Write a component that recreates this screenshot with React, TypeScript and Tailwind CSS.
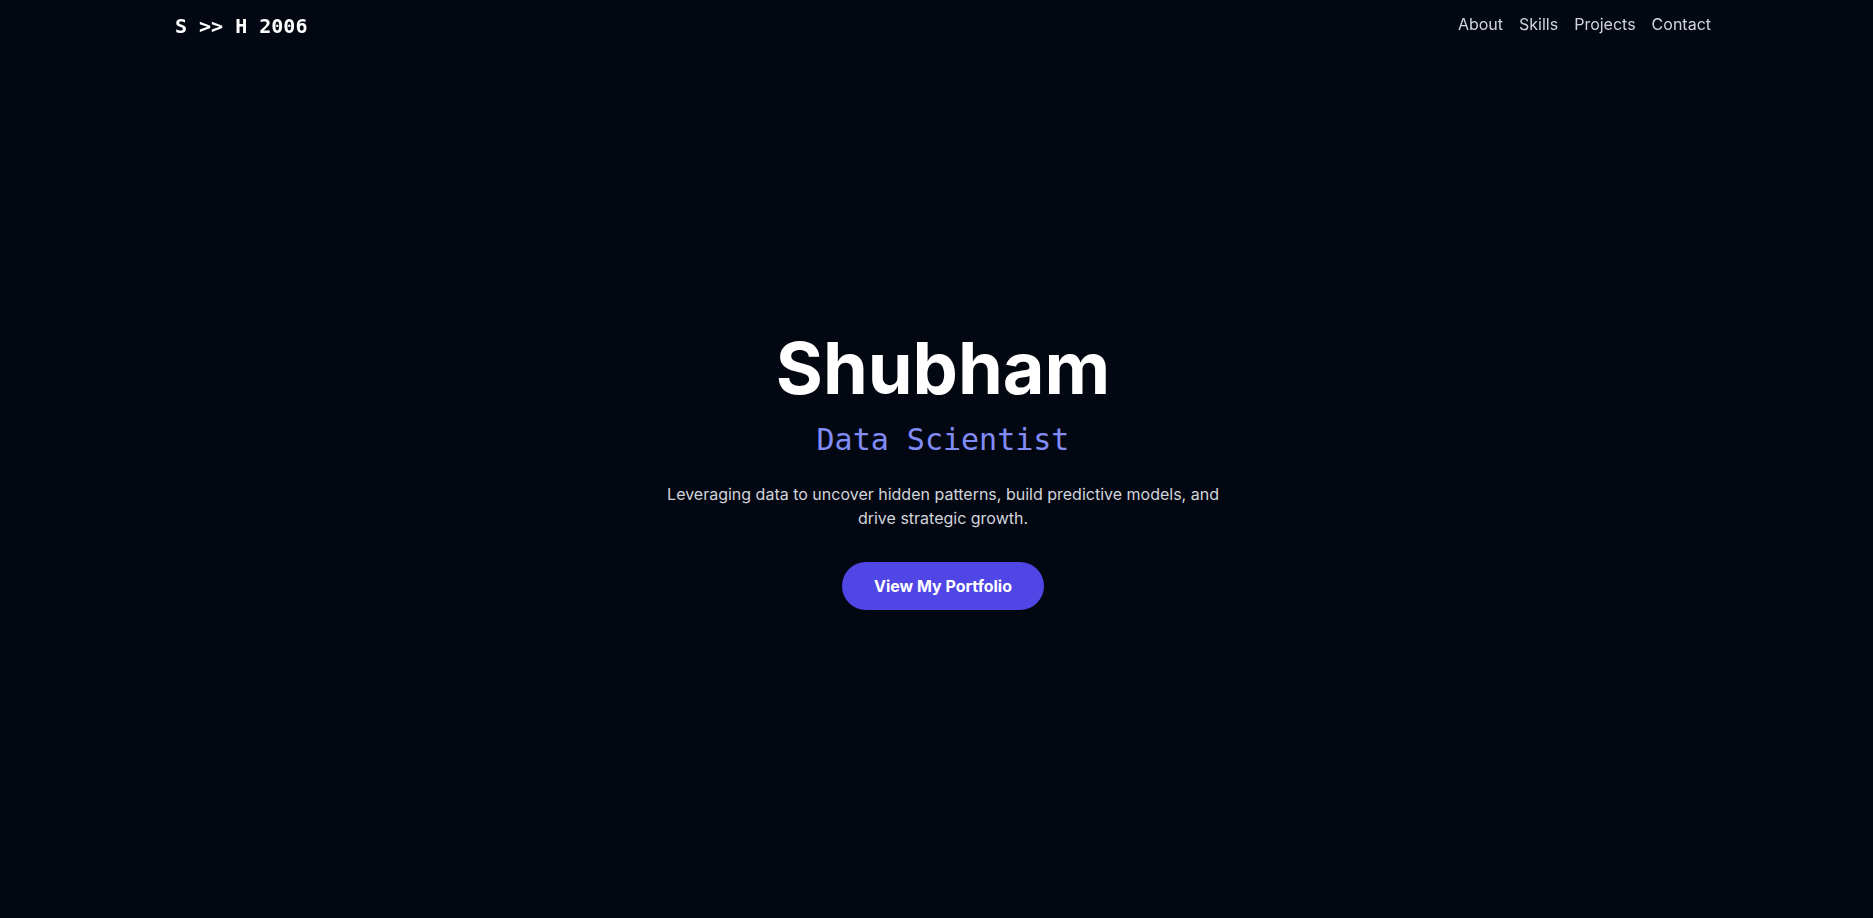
export default function App() {
  return (
    <div className="min-h-screen bg-[#030712] pl-[13px] font-['Inter',sans-serif] text-white">
      <header className="fixed inset-x-0 top-0 pl-[13px]">
        <nav className="mx-auto flex max-w-[96rem] items-start justify-between py-3">
          <a href="#" className="font-['DejaVu_Sans_Mono',monospace] text-xl font-bold text-white">
            S &gt;&gt; H 2006
          </a>
          <ul className="flex gap-4 text-base text-[#d1d5db]">
            <li><a href="#about">About</a></li>
            <li><a href="#skills">Skills</a></li>
            <li><a href="#projects">Projects</a></li>
            <li><a href="#contact">Contact</a></li>
          </ul>
        </nav>
      </header>

      <section className="flex h-screen flex-col items-center justify-center pt-6 text-center">
        <h1 className="text-7xl font-bold">Shubham</h1>
        <h2 className="mt-[18px] font-['DejaVu_Sans_Mono',monospace] text-3xl text-[#818cf8]">Data Scientist</h2>
        <p className="mt-6 max-w-xl text-base text-[#d1d5db]">
          Leveraging data to uncover hidden patterns, build predictive models, and drive strategic growth.
        </p>
        <a href="#projects" className="mt-8 rounded-full bg-[#4f46e5] px-8 py-3 font-bold text-white">
          View My Portfolio
        </a>
      </section>
    </div>
  );
}
